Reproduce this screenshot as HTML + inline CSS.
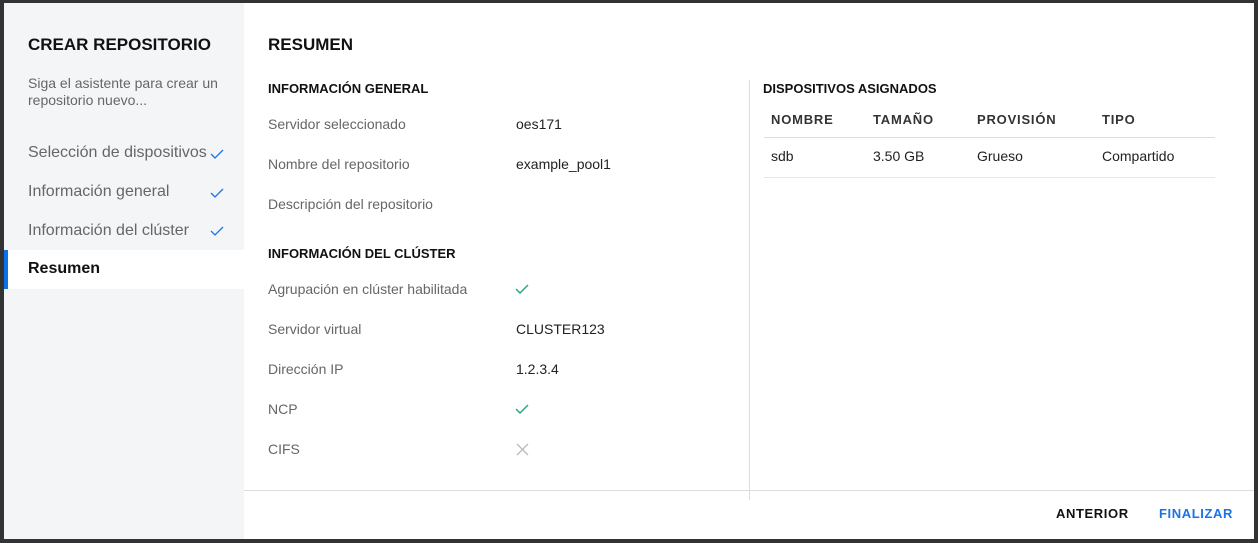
<!DOCTYPE html>
<html><head><meta charset="utf-8"><style>
*{margin:0;padding:0;box-sizing:border-box}
body{width:1258px;height:543px;background:#333;font-family:"Liberation Sans",Arial,sans-serif;position:relative;overflow:hidden}
.dlg{position:absolute;left:4px;top:3px;width:1250px;height:536px;background:#fff}
.side{position:absolute;left:0;top:0;width:240px;height:536px;background:#f4f5f7}
.a{position:absolute;white-space:nowrap}
.t{font-size:17px;font-weight:bold;color:#111}
.sub{font-size:14px;color:#666;line-height:17px}
.nav{font-size:16px;color:#666}
.lbl{font-size:14px;color:#666}
.val{font-size:14px;color:#222}
.h{font-size:13px;font-weight:bold;color:#111}
.th{font-size:13px;font-weight:bold;color:#333;letter-spacing:.8px}
svg{position:absolute}
</style></head><body>
<div class="dlg">
<div class="side">
<div class="a t" style="left:24px;top:32px">CREAR REPOSITORIO</div>
<div class="a sub" style="left:24px;top:72px">Siga el asistente para crear un<br>repositorio nuevo...</div>
<div class="a nav" style="left:24px;top:141px">Selección de dispositivos</div>
<div class="a nav" style="left:24px;top:180px">Información general</div>
<div class="a nav" style="left:24px;top:219px">Información del clúster</div>
<svg style="left:206px;top:145px" width="14" height="12"><path d="M1 6 L5 10 L13 2" fill="none" stroke="#1a73e8" stroke-width="1.3"/></svg>
<svg style="left:206px;top:184px" width="14" height="12"><path d="M1 6 L5 10 L13 2" fill="none" stroke="#1a73e8" stroke-width="1.3"/></svg>
<svg style="left:206px;top:222px" width="14" height="12"><path d="M1 6 L5 10 L13 2" fill="none" stroke="#1a73e8" stroke-width="1.3"/></svg>
<div class="a" style="left:0;top:247px;width:240px;height:39px;background:#fff;border-left:4px solid #0a72e8"></div>
<div class="a nav" style="left:24px;top:257px;color:#111;font-weight:bold">Resumen</div>
</div>
<div class="a t" style="left:264px;top:32px">RESUMEN</div>
<div class="a h" style="left:264px;top:78px">INFORMACIÓN GENERAL</div>
<div class="a lbl" style="left:264px;top:113px">Servidor seleccionado</div><div class="a val" style="left:512px;top:113px">oes171</div>
<div class="a lbl" style="left:264px;top:153px">Nombre del repositorio</div><div class="a val" style="left:512px;top:153px">example_pool1</div>
<div class="a lbl" style="left:264px;top:193px">Descripción del repositorio</div>
<div class="a h" style="left:264px;top:243px">INFORMACIÓN DEL CLÚSTER</div>
<div class="a lbl" style="left:264px;top:278px">Agrupación en clúster habilitada</div>
<svg style="left:511px;top:280px" width="14" height="12"><path d="M1 6 L5 10 L13 2" fill="none" stroke="#22a67a" stroke-width="1.4"/></svg>
<div class="a lbl" style="left:264px;top:318px">Servidor virtual</div><div class="a val" style="left:512px;top:318px">CLUSTER123</div>
<div class="a lbl" style="left:264px;top:358px">Dirección IP</div><div class="a val" style="left:512px;top:358px">1.2.3.4</div>
<div class="a lbl" style="left:264px;top:398px">NCP</div>
<svg style="left:511px;top:400px" width="14" height="12"><path d="M1 6 L5 10 L13 2" fill="none" stroke="#22a67a" stroke-width="1.4"/></svg>
<div class="a lbl" style="left:264px;top:438px">CIFS</div>
<svg style="left:512px;top:440px" width="13" height="13"><path d="M1 1 L12 12 M12 1 L1 12" fill="none" stroke="#bbb" stroke-width="1.3"/></svg>
<div class="a" style="left:745px;top:77px;width:1px;height:420px;background:#ddd"></div>
<div class="a h" style="left:759px;top:78px">DISPOSITIVOS ASIGNADOS</div>
<div class="a th" style="left:767px;top:109px">NOMBRE</div>
<div class="a th" style="left:869px;top:109px">TAMAÑO</div>
<div class="a th" style="left:973px;top:109px">PROVISIÓN</div>
<div class="a th" style="left:1098px;top:109px">TIPO</div>
<div class="a" style="left:760px;top:134px;width:451px;height:1px;background:#ddd"></div>
<div class="a val" style="left:767px;top:145px">sdb</div>
<div class="a val" style="left:869px;top:145px">3.50 GB</div>
<div class="a val" style="left:973px;top:145px">Grueso</div>
<div class="a val" style="left:1098px;top:145px">Compartido</div>
<div class="a" style="left:760px;top:174px;width:451px;height:1px;background:#e6e6e6"></div>
<div class="a" style="left:240px;top:487px;width:1010px;height:1px;background:#ddd"></div>
<div class="a th" style="left:1052px;top:503px;color:#111;letter-spacing:.6px">ANTERIOR</div>
<div class="a th" style="left:1155px;top:503px;color:#1a73e8;letter-spacing:.6px">FINALIZAR</div>
</div>
</body></html>
